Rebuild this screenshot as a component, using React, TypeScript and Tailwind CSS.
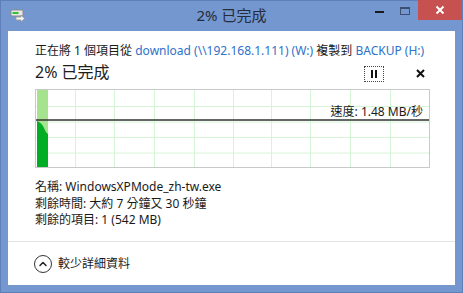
import { ChevronUp } from "lucide-react";

const font = { fontFamily: '"Segoe UI", "Noto Sans", "Noto Sans CJK TC", sans-serif' };

function CopyIcon() {
  return (
    <svg width="16" height="16" viewBox="0 0 16 16">
      <rect x="1" y="3" width="12" height="6" rx="1" fill="#e8e8e8" stroke="#8a8a8a" />
      <rect x="2.5" y="5" width="6" height="2" fill="#2fc02f" />
      <path d="M6 10h5v-2l3.5 3.5L11 15v-2H6z" fill="#f2f2f2" stroke="#9a9a9a" strokeWidth="0.8" />
    </svg>
  );
}

function Graph() {
  const vlines = [74, 113, 153, 193, 232, 270, 309, 349, 389].map((x) => x - 35);
  const hlines = [16, 31.5, 47, 62.5];
  return (
    <svg width="393" height="77" className="block">
      {vlines.map((x) => (
        <line key={x} x1={x + 0.5} y1="0" x2={x + 0.5} y2="77" stroke="#d6f5d6" />
      ))}
      {hlines.map((y) => (
        <line key={y} x1="0" y1={y + 0.5} x2="393" y2={y + 0.5} stroke="#d6f5d6" />
      ))}
      <rect x="1" y="0" width="11" height="77" fill="#a6e38f" />
      <path d="M1 31 Q6 33 8 38 Q10 43 12 44 L12 77 L1 77 Z" fill="#00ad25" />
      <line x1="0" y1="30" x2="393" y2="30" stroke="#333" strokeWidth="1.6" />
    </svg>
  );
}

export default function App() {
  return (
    <div
      className="w-[463px] h-[293px] bg-[#7497d0] border border-[#5f7fb8] flex flex-col text-[#1e1e1e]"
      style={font}
    >
      {/* title bar */}
      <div className="relative h-[30px] flex items-start">
        <div className="absolute left-[9px] top-[6px]">
          <CopyIcon />
        </div>
        <div className="flex-1 text-center text-[15px] leading-[29px] text-[#262d3a]">2% 已完成</div>
        <div className="absolute right-0 top-[-1px] flex items-start">
          <div className="w-[26px] h-[20px] flex items-center justify-center">
            <div className="w-[9px] h-[2px] bg-[#1b1b1b] mt-[4px]" />
          </div>
          <div className="w-[26px] h-[20px] flex items-start justify-center pt-[7px]">
            <div className="w-[10px] h-[8px] border border-[#3d4f70] border-t-2" />
          </div>
          <div className="w-[44px] h-[20px] bg-[#c75050] flex items-center justify-center text-white">
            <svg width="10" height="10" viewBox="0 0 10 10">
              <path d="M1.5 1.5l7 7M8.5 1.5l-7 7" stroke="#fff" strokeWidth="2" />
            </svg>
          </div>
        </div>
      </div>

      {/* content */}
      <div className="mx-[7px] mb-[7px] flex-1 bg-white flex flex-col">
        <div className="pl-[27px] pr-[26px] pt-[12px]">
          <div className="text-[12px] leading-4 whitespace-nowrap text-[#1a1a1a]">
            正在將 1 個項目從 <span className="text-[#2e72c9]">download (\\192.168.1.111) (W:)</span> 複製到{" "}
            <span className="text-[#2e72c9]">BACKUP (H:)</span>
          </div>
          <div className="mt-[2px] flex items-center h-[22px]">
            <div className="text-[16px] leading-[22px] flex-1">2% 已完成</div>
            <div className="w-[20px] h-[16px] border border-dotted border-[#444] flex items-center justify-center gap-[2px] mr-[32px] mt-[3px]">
              <div className="w-[2px] h-[8px] bg-[#111]" />
              <div className="w-[2px] h-[8px] bg-[#111]" />
            </div>
            <svg width="9" height="9" viewBox="0 0 9 9" className="mr-[4px] mt-[3px]">
              <path d="M1 1l7 7M8 1l-7 7" stroke="#111" strokeWidth="2" />
            </svg>
          </div>
          <div className="relative mt-[6px] w-[395px] border border-[#c9c9c9]">
            <Graph />
            <div className="absolute right-[6px] top-[14px] text-[12px] leading-4 text-[#1a1a1a]">
              速度: 1.48 MB/秒
            </div>
          </div>
          <div className="mt-[11px] text-[12px] leading-[16.5px] text-[#1a1a1a]">
            <div>名稱: WindowsXPMode_zh-tw.exe</div>
            <div>剩餘時間: 大約 7 分鐘又 30 秒鐘</div>
            <div>剩餘的項目: 1 (542 MB)</div>
          </div>
        </div>
        <div className="mt-auto h-[44px] border-t border-[#e3e3e3] flex items-center pl-[26px] gap-[6px]">
          <div className="w-[18px] h-[18px] rounded-full border-[1.5px] border-[#333] flex items-center justify-center">
            <ChevronUp size={12} strokeWidth={3} className="text-[#222]" />
          </div>
          <span className="text-[12px] text-[#1a1a1a]">較少詳細資料</span>
        </div>
      </div>
    </div>
  );
}
